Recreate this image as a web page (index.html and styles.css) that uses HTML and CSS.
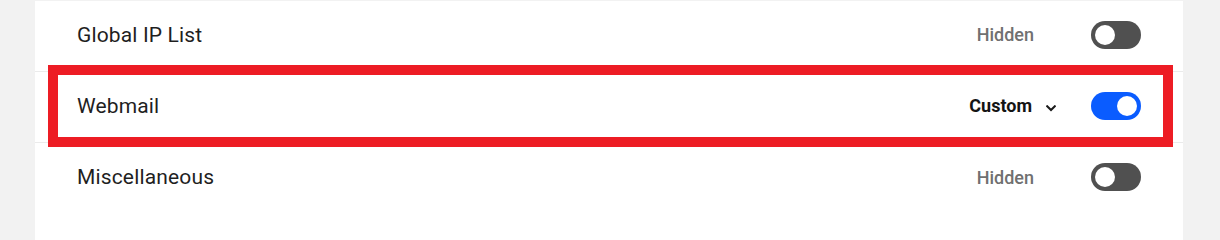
FILE: index.html
```html
<!DOCTYPE html>
<html lang="en">
<head>
<meta charset="utf-8">
<title>Visibility settings</title>
<link rel="stylesheet" href="styles.css">
</head>
<body>
<div class="panel">
  <div class="row">
    <span class="name">Global IP List</span>
    <span class="status status-hidden">Hidden</span>
    <span class="toggle"><span class="knob"></span></span>
  </div>
  <div class="row row-highlight">
    <span class="name">Webmail</span>
    <span class="status status-custom">Custom
      <svg class="chevron" width="10" height="7" viewBox="0 0 10 7"><path d="M1.2 1.3 L5 5 L8.8 1.3" fill="none" stroke="#1b1b1b" stroke-width="2.1" stroke-linecap="square"/></svg>
    </span>
    <span class="toggle toggle-on"><span class="knob"></span></span>
    <span class="highlight"></span>
  </div>
  <div class="row">
    <span class="name">Miscellaneous</span>
    <span class="status status-hidden">Hidden</span>
    <span class="toggle"><span class="knob"></span></span>
  </div>
</div>
</body>
</html>
```

FILE: styles.css
```css
html, body {
  margin: 0;
  padding: 0;
  background: #f2f2f2;
  font-family: Roboto, "Liberation Sans", Arial, sans-serif;
  overflow: hidden;
}
.panel {
  margin: 1px 0 0 35px;
  width: 1148px;
  height: calc(100vh - 1px);
  min-height: 218px;
  background: #ffffff;
}
.row {
  position: relative;
  display: flex;
  align-items: center;
  height: 71px;
  padding: 0 42px 3px 42px;
  box-sizing: border-box;
  border-bottom: 1px solid #ebebeb;
}
.row:last-child {
  border-bottom: none;
}
.name {
  flex: 1;
  font-size: 21px;
  color: #1f1f1f;
  letter-spacing: 0.15px;
}
.status {
  font-size: 18px;
  font-weight: 500;
  display: flex;
  align-items: center;
}
.status-hidden {
  color: #707070;
  margin-right: 57px;
}
.status-custom {
  color: #141414;
  font-weight: 700;
  margin-right: 35px;
}
.chevron {
  margin-left: 14px;
  margin-top: 6px;
}
.toggle {
  width: 50px;
  height: 28px;
  border-radius: 14px;
  background: #505050;
  display: flex;
  align-items: center;
  padding: 0 4px;
  box-sizing: border-box;
}
.toggle-on {
  background: #0a5cff;
  justify-content: flex-end;
}
.knob {
  width: 20px;
  height: 20px;
  border-radius: 50%;
  background: #ffffff;
}
.highlight {
  position: absolute;
  left: 13px;
  right: 10px;
  top: -7px;
  bottom: -5px;
  border: 10px solid #ed1c24;
  pointer-events: none;
}
```
